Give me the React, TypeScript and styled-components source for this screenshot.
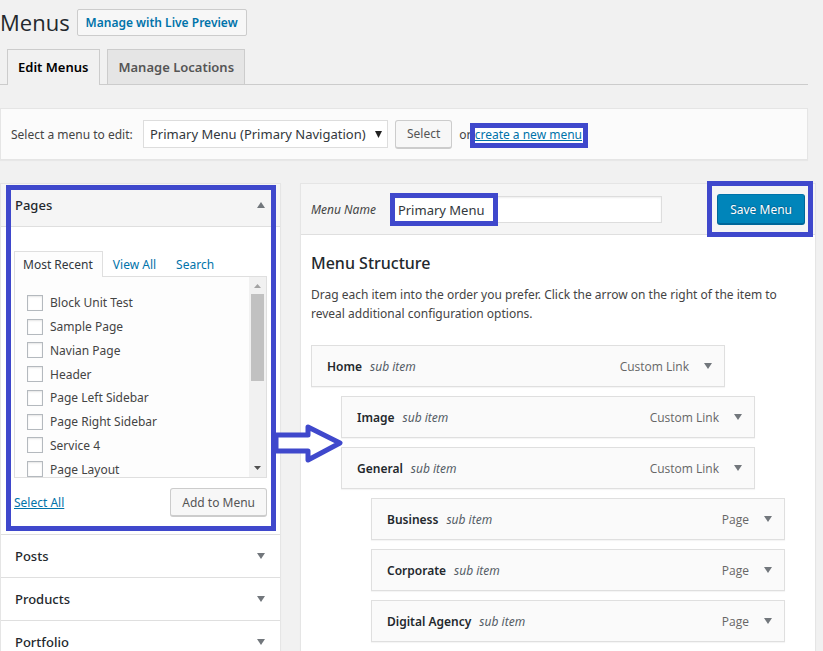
import React from "react";
import styled, { createGlobalStyle, css } from "styled-components";

const ink = "#444";
const heading = "#23282d";
const link = "#0073aa";
const line = "#dfdfdf";
const marker = "#3f48cc";

const GlobalStyle = createGlobalStyle`
  * { box-sizing: border-box; }
  body {
    margin: 0;
    background: #f1f1f1;
    color: ${ink};
    font: 13px/19px "Noto Sans", "Open Sans", sans-serif;
  }
  button, input, select { font: inherit; color: inherit; }
  h1, h2, h3, p, ul { margin: 0; padding: 0; }
  ul { list-style: none; }
  a { color: ${link}; }
`;

const Page = styled.div`
  height: 100vh;
  overflow: hidden;
`;

const TopArea = styled.header`
  padding-right: 15px;
`;

const TitleRow = styled.div`
  display: flex;
  align-items: center;
  gap: 7px;
  padding-top: 9px;
`;

const PageTitle = styled.h1`
  font-family: "Open Sans", sans-serif;
  font-size: 22px;
  font-weight: 400;
  line-height: 27px;
  color: ${heading};
`;

const PreviewLink = styled.a`
  height: 27px;
  padding: 0 8px;
  border: 1px solid #ccc;
  border-radius: 2px;
  background: #f7f7f7;
  font-size: 12px;
  font-weight: 600;
  line-height: 26px;
  text-decoration: none;
`;

const TabBar = styled.nav`
  display: flex;
  gap: 7px;
  margin-top: 13px;
  padding-left: 7px;
  border-bottom: 1px solid #ccc;
`;

const Tab = styled.a<{ $active?: boolean }>`
  height: 35px;
  padding: 0 10px;
  border: 1px solid #ccc;
  border-bottom: 0;
  background: #e5e5e5;
  color: #555;
  font-size: 13px;
  font-weight: 600;
  line-height: 35px;
  text-decoration: none;
  ${(p) =>
    p.$active &&
    css`
      height: 36px;
      margin-bottom: -1px;
      padding-right: 11px;
      background: #f1f1f1;
      color: #000;
    `}
`;

const PickerBar = styled.form`
  display: flex;
  align-items: center;
  gap: 7px;
  height: 52px;
  margin-top: 23px;
  padding-left: 10px;
  border: 1px solid #e5e5e5;
  background: #fbfbfb;
  box-shadow: 0 1px 1px rgba(0, 0, 0, 0.04);
  font-size: 12px;
  white-space: nowrap;
`;

const PickerLabel = styled.label`
  min-width: 125px;
`;

const SelectWrap = styled.span`
  display: grid;
  align-items: center;
  width: 245px;
  & > * { grid-area: 1 / 1; }
  & > svg {
    justify-self: end;
    margin-right: 6px;
    pointer-events: none;
  }
`;

const Select = styled.select`
  appearance: none;
  width: 100%;
  height: 28px;
  padding: 0 6px;
  border: 1px solid #ddd;
  border-radius: 0;
  background: #fff;
  color: #32373c;
  font-size: 13px;
`;

const Button = styled.button<{ $primary?: boolean }>`
  height: 29px;
  padding: 0 11px;
  border: 1px solid #ccc;
  border-bottom-width: 2px;
  border-radius: 3px;
  background: #f7f7f7;
  color: #555;
  font-size: 12px;
  ${(p) =>
    p.$primary &&
    css`
      height: 31px;
      padding: 1px 12px 0;
      border-color: #0073aa #006799 #006799;
      background: #0085ba;
      color: #fff;
      text-shadow: 0 -1px 1px #006799, 1px 0 1px #006799;
    `}
`;

const Marked = styled.span`
  position: relative;
  display: inline-block;
`;

const Outline = styled.span<{ $inset: string; $filled?: boolean }>`
  position: absolute;
  inset: ${(p) => p.$inset};
  border: 5px solid ${marker};
  background: ${(p) => (p.$filled ? "#fff" : "none")};
  pointer-events: none;
`;

const Above = styled.span`
  position: relative;
`;

const Columns = styled.main`
  display: grid;
  grid-template-columns: 281px minmax(0, 1fr);
  align-items: start;
  gap: 19px;
  margin-top: 23px;
  padding-right: 7px;
`;

const Panel = styled.section`
  min-width: 0;
  border: 1px solid #e5e5e5;
  background: #fff;
  box-shadow: 0 1px 1px rgba(0, 0, 0, 0.04);
`;

const OpenSection = styled.section`
  position: relative;
  border-bottom: 1px solid ${line};
`;

const SectionTitle = styled.h3<{ $open?: boolean }>`
  display: flex;
  border-bottom: 1px solid ${line};
  background: ${(p) => (p.$open ? "#f5f5f5" : "#fff")};
`;

const SectionToggle = styled.button`
  display: flex;
  flex: 1;
  align-items: center;
  justify-content: space-between;
  height: 42px;
  padding: 0 15px 0 14px;
  border: 0;
  background: none;
  color: ${heading};
  font-size: 13px;
  font-weight: 500;
  text-align: left;
`;

const SectionBody = styled.div`
  padding: 24px 13px 17px;
`;

const FilterTabs = styled.div`
  display: flex;
`;

const FilterTab = styled.button<{ $active?: boolean }>`
  height: 25px;
  padding: 0 9px;
  border: 1px solid transparent;
  border-bottom: 0;
  background: none;
  color: ${link};
  font-size: 12px;
  ${(p) =>
    p.$active &&
    css`
      z-index: 1;
      height: 26px;
      margin-bottom: -1px;
      padding: 0 9px 0 8px;
      border-color: ${line};
      background: #fdfdfd;
      color: #32373c;
    `}
`;

const ListFrame = styled.div`
  display: flex;
  height: 202px;
  overflow: hidden;
  border: 1px solid ${line};
  background: #fdfdfd;
`;

const PageList = styled.ul`
  display: grid;
  flex: 1;
  grid-auto-rows: 1fr;
  height: 190px;
  margin: 14px 0 0 12px;
`;

const CheckLabel = styled.label`
  display: flex;
  align-items: center;
  gap: 7px;
  height: 100%;
  font-size: 12px;
`;

const Checkbox = styled.input`
  appearance: none;
  width: 16px;
  height: 16px;
  margin: 0;
  border: 1px solid #b4b9be;
  background: #fff;
  box-shadow: inset 0 1px 2px rgba(0, 0, 0, 0.1);
  &:checked { background: ${link}; }
`;

const ScrollTrack = styled.div`
  display: flex;
  flex-direction: column;
  align-items: center;
  width: 17px;
  padding: 7px 0;
  background: #f1f1f1;
`;

const ScrollThumb = styled.div`
  width: 13px;
  height: 87px;
  margin: 6px 0 auto;
  background: #c1c1c1;
`;

const SectionFooter = styled.div`
  display: flex;
  align-items: center;
  justify-content: space-between;
  margin-top: 10px;
  font-size: 12px;
`;

const ArrowMark = styled.svg`
  position: absolute;
  right: -64px;
  top: 238px;
  z-index: 2;
  fill: #fff;
  stroke: ${marker};
  stroke-width: 5px;
  stroke-linejoin: round;
`;

const EditorHeader = styled.div`
  display: flex;
  align-items: center;
  justify-content: space-between;
  height: 51px;
  padding: 0 10px;
  border-bottom: 1px solid ${line};
  background: #f5f5f5;
`;

const NameField = styled.label`
  display: flex;
  align-items: center;
  gap: 16px;
  font-size: 12px;
  font-style: italic;
  white-space: nowrap;
`;

const NameBox = styled.span`
  position: relative;
  width: 270px;
  font-style: normal;
`;

const NameInput = styled.input`
  display: block;
  width: 100%;
  height: 27px;
  padding: 1px 5px 0;
  border: 1px solid #ddd;
  background: #fff;
  color: #32373c;
  font-size: 13px;
  box-shadow: inset 0 1px 2px rgba(0, 0, 0, 0.07);
`;

const EditorBody = styled.div`
  padding: 18px 10px;
`;

const EditorTitle = styled.h2`
  margin-bottom: 11px;
  color: ${heading};
  font-size: 16px;
  font-weight: 500;
  line-height: 21px;
`;

const Hint = styled.p`
  max-width: 490px;
  font-size: 12px;
`;

const MenuTree = styled.ul`
  display: grid;
  gap: 9px;
  margin-top: 22px;
`;

const MenuRow = styled.li<{ $depth: number }>`
  display: flex;
  align-items: center;
  max-width: 414px;
  height: 42px;
  margin-left: ${(p) => p.$depth * 30}px;
  padding: 0 12px 0 15px;
  border: 1px solid ${line};
  background: #fafafa;
  box-shadow: 0 1px 1px rgba(0, 0, 0, 0.04);
  font-size: 12px;
`;

const RowTitle = styled.span`
  color: ${heading};
  font-weight: 600;
`;

const RowNote = styled.em`
  margin-left: 8px;
  color: #555d66;
`;

const RowKind = styled.span`
  margin-left: auto;
  color: #666;
  font-family: "Open Sans", sans-serif;
`;

const RowToggle = styled.button`
  display: flex;
  margin-left: 15px;
  padding: 0;
  border: 0;
  background: none;
`;

function Triangle({ up, color = "#72777c", width = 8, height = 6 }: { up?: boolean; color?: string; width?: number; height?: number }) {
  return (
    <svg width={width} height={height} viewBox="0 0 8 6" preserveAspectRatio="none" aria-hidden="true">
      <path d={up ? "M0 6L4 0L8 6Z" : "M0 0H8L4 6Z"} fill={color} />
    </svg>
  );
}

const pages = ["Block Unit Test", "Sample Page", "Navian Page", "Header", "Page Left Sidebar", "Page Right Sidebar", "Service 4", "Page Layout"];
const sections = ["Posts", "Products", "Portfolio"];
const items = [
  { title: "Home", kind: "Custom Link", depth: 0 },
  { title: "Image", kind: "Custom Link", depth: 1 },
  { title: "General", kind: "Custom Link", depth: 1 },
  { title: "Business", kind: "Page", depth: 2 },
  { title: "Corporate", kind: "Page", depth: 2 },
  { title: "Digital Agency", kind: "Page", depth: 2 },
];

export default function App() {
  return (
    <Page>
      <GlobalStyle />
      <TopArea>
        <TitleRow>
          <PageTitle>Menus</PageTitle>
          <PreviewLink href="#preview">Manage with Live Preview</PreviewLink>
        </TitleRow>
        <TabBar>
          <Tab href="#edit" $active>Edit Menus</Tab>
          <Tab href="#locations">Manage Locations</Tab>
        </TabBar>
        <PickerBar onSubmit={(e) => e.preventDefault()}>
          <PickerLabel htmlFor="menu-picker">Select a menu to edit:</PickerLabel>
          <SelectWrap>
            <Select id="menu-picker">
              <option>Primary Menu (Primary Navigation)</option>
            </Select>
            <Triangle color="#222" width={7} height={7} />
          </SelectWrap>
          <Button type="submit">Select</Button>
          <span>
            or{" "}
            <Marked>
              <Outline $inset="-2px -6px -4px -5px" $filled />
              <Above><a href="#new">create a new menu</a></Above>
            </Marked>
          </span>
        </PickerBar>
      </TopArea>

      <Columns>
        <Panel>
          <OpenSection>
            <SectionTitle $open>
              <SectionToggle aria-expanded="true">
                Pages
                <Triangle up />
              </SectionToggle>
            </SectionTitle>
            <SectionBody>
              <FilterTabs>
                <FilterTab $active>Most Recent</FilterTab>
                <FilterTab>View All</FilterTab>
                <FilterTab>Search</FilterTab>
              </FilterTabs>
              <ListFrame>
                <PageList>
                  {pages.map((name) => (
                    <li key={name}>
                      <CheckLabel>
                        <Checkbox type="checkbox" />
                        {name}
                      </CheckLabel>
                    </li>
                  ))}
                </PageList>
                <ScrollTrack>
                  <Triangle up color="#a3a3a3" width={7} height={4} />
                  <ScrollThumb />
                  <Triangle color="#505050" width={7} height={4} />
                </ScrollTrack>
              </ListFrame>
              <SectionFooter>
                <a href="#all">Select All</a>
                <Button>Add to Menu</Button>
              </SectionFooter>
            </SectionBody>
            <Outline $inset="1px 4px 3px 5px" />
            <ArrowMark width="72" height="44" viewBox="0 0 72 44" aria-hidden="true">
              <path d="M4 13H36V5L68 21L36 38V29H4Z" />
            </ArrowMark>
          </OpenSection>
          {sections.map((name) => (
            <SectionTitle key={name}>
              <SectionToggle aria-expanded="false">
                {name}
                <Triangle />
              </SectionToggle>
            </SectionTitle>
          ))}
        </Panel>

        <Panel>
          <EditorHeader>
            <NameField>
              Menu Name
              <NameBox>
                <NameInput defaultValue="Primary Menu" />
                <Outline $inset="-3px 164px -3px -2px" />
              </NameBox>
            </NameField>
            <Marked>
              <Outline $inset="-13px -8px -12px -10px" />
              <Button $primary>Save Menu</Button>
            </Marked>
          </EditorHeader>
          <EditorBody>
            <EditorTitle>Menu Structure</EditorTitle>
            <Hint>
              Drag each item into the order you prefer. Click the arrow on the right of the item to reveal additional configuration options.
            </Hint>
            <MenuTree>
              {items.map((item) => (
                <MenuRow key={item.title} $depth={item.depth}>
                  <RowTitle>{item.title}</RowTitle>
                  <RowNote>sub item</RowNote>
                  <RowKind>{item.kind}</RowKind>
                  <RowToggle aria-label={`Edit ${item.title}`}>
                    <Triangle />
                  </RowToggle>
                </MenuRow>
              ))}
            </MenuTree>
          </EditorBody>
        </Panel>
      </Columns>
    </Page>
  );
}
